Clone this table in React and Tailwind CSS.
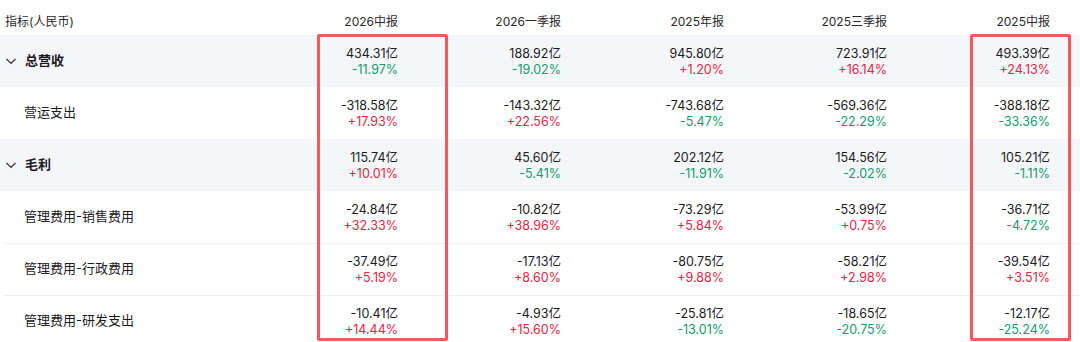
import React from "react";

const cols = ["2026中报", "2026一季报", "2025年报", "2025三季报", "2025中报"];

const rows = [
  { name: "总营收", group: true, vals: [["434.31亿", "-11.97%"], ["188.92亿", "-19.02%"], ["945.80亿", "+1.20%"], ["723.91亿", "+16.14%"], ["493.39亿", "+24.13%"]] },
  { name: "营运支出", vals: [["-318.58亿", "+17.93%"], ["-143.32亿", "+22.56%"], ["-743.68亿", "-5.47%"], ["-569.36亿", "-22.29%"], ["-388.18亿", "-33.36%"]] },
  { name: "毛利", group: true, vals: [["115.74亿", "+10.01%"], ["45.60亿", "-5.41%"], ["202.12亿", "-11.91%"], ["154.56亿", "-2.02%"], ["105.21亿", "-1.11%"]] },
  { name: "管理费用-销售费用", vals: [["-24.84亿", "+32.33%"], ["-10.82亿", "+38.96%"], ["-73.29亿", "+5.84%"], ["-53.99亿", "+0.75%"], ["-36.71亿", "-4.72%"]] },
  { name: "管理费用-行政费用", line: true, vals: [["-37.49亿", "+5.19%"], ["-17.13亿", "+8.60%"], ["-80.75亿", "+9.88%"], ["-58.21亿", "+2.98%"], ["-39.54亿", "+3.51%"]] },
  { name: "管理费用-研发支出", line: true, vals: [["-10.41亿", "+14.44%"], ["-4.93亿", "+15.60%"], ["-25.81亿", "-13.01%"], ["-18.65亿", "-20.75%"], ["-12.17亿", "-25.24%"]] },
];

function Chevron() {
  return (
    <svg width="12" height="12" viewBox="0 0 12 12" className="mr-[8px]">
      <polyline points="1.5,4 6,8.5 10.5,4" fill="none" stroke="#333" strokeWidth="1.2" />
    </svg>
  );
}

export default function App() {
  return (
    <div
      className="relative w-[1080px] h-[342px] overflow-hidden bg-white text-[#1b1b1f]"
      style={{ fontFamily: '"Inter", "Noto Sans CJK SC", sans-serif' }}
    >
      <div className="grid grid-cols-[235px_repeat(5,163px)_1fr] h-[35px] items-center pt-[9px] text-[12px] text-[#2a2a2e]">
        <div className="pl-[5px]">指标(人民币)</div>
        {cols.map((c) => (
          <div key={c} className="text-right">{c}</div>
        ))}
        <div />
      </div>
      {rows.map((r) => (
        <div key={r.name} className={"relative grid grid-cols-[235px_repeat(5,163px)_1fr] h-[52px] items-center " + (r.group ? "bg-[#f5f6fa]" : "")}>
          {r.line && <div className="absolute left-[4px] right-0 top-0 h-px bg-[#f0f0f2]" />}
          <div className={"flex items-center text-[13px] " + (r.group ? "pl-[5px] font-bold" : "pl-[24px]")}>
            {r.group && <Chevron />}
            {r.name}
          </div>
          {r.vals.map(([v, p], i) => (
            <div key={i} className="flex flex-col items-end text-[12.5px] leading-[16px] pt-[1px]">
              <span>{v}</span>
              <span className={p.startsWith("+") ? "text-[#e3263f]" : "text-[#159a6e]"}>{p}</span>
            </div>
          ))}
          <div />
        </div>
      ))}
      <div className="absolute left-[317px] top-[34px] w-[131px] h-[307px] border-[3px] border-[#f45a5c] rounded-[2px]" />
      <div className="absolute left-[970px] top-[34px] w-[101px] h-[307px] border-[3px] border-[#f45a5c] rounded-[2px]" />
    </div>
  );
}
